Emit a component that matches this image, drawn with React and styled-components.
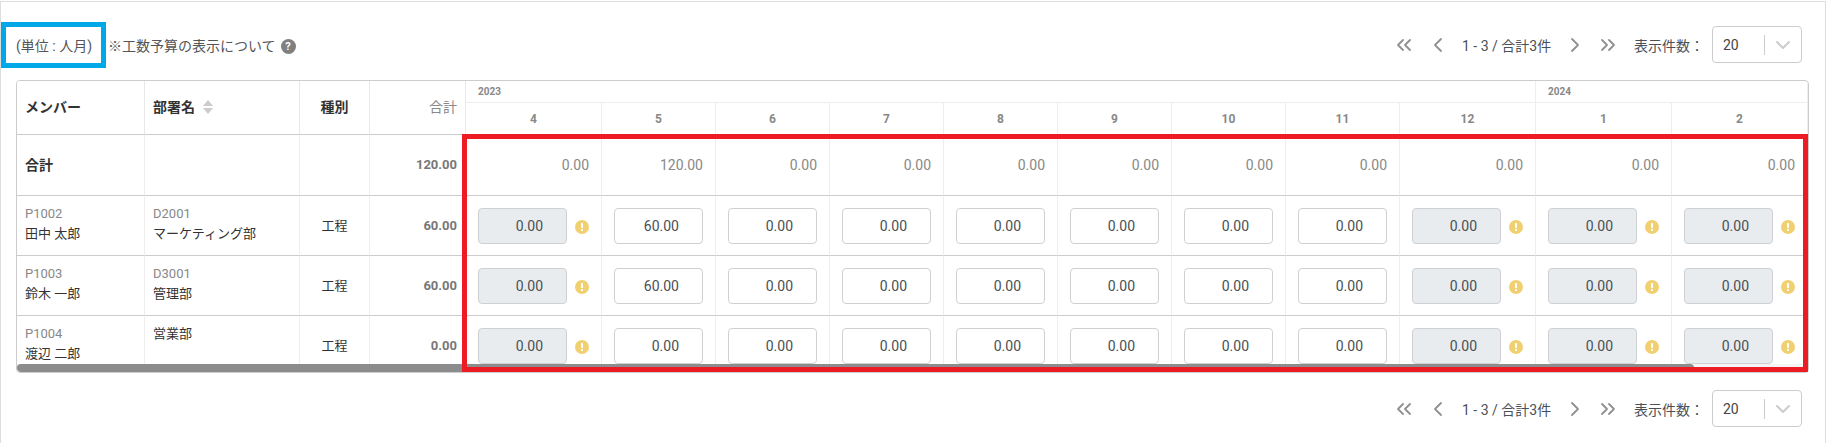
import React from "react";
import styled, { createGlobalStyle } from "styled-components";
import { ChevronLeft, ChevronRight, ChevronsLeft, ChevronsRight, ChevronDown } from "lucide-react";

const Global = createGlobalStyle`
  html, body { margin: 0; padding: 0; background: #fff; overflow: hidden; }
  body { font-family: Roboto, "Noto Sans CJK JP", sans-serif; color: #333; }
  * { box-sizing: border-box; }
`;

const Panel = styled.div`
  position: relative;
  height: 442px;
  margin-top: 1px;
  padding: 0 16px 0 15px;
  border: 1px solid #ddd;
  border-bottom: none;
`;
const Toolbar = styled.div`
  display: flex;
  align-items: center;
  justify-content: space-between;
  height: 37px;
  margin-top: 24px;
  margin-bottom: 17px;
  padding-right: 7px;
`;
const BottomBar = styled(Toolbar)`
  justify-content: flex-end;
  margin-top: 17px;
  margin-bottom: 0;
`;
const Notes = styled.div`
  display: flex;
  align-items: center;
  font-size: 14px;
  color: #555;
`;
const Unit = styled.span`
  margin-right: 16px;
`;
const HelpIcon = styled.span`
  display: inline-flex;
  align-items: center;
  justify-content: center;
  width: 15px;
  height: 15px;
  margin: 3px 0 0 5px;
  border-radius: 50%;
  background: #808080;
  color: #fff;
  font-size: 11px;
  font-weight: 700;
`;
const Pager = styled.div`
  display: flex;
  align-items: center;
  font-size: 14px;
  color: #495057;
`;
const PagerButton = styled.span`
  display: flex;
  justify-content: center;
  width: ${(p) => p.$w}px;
  color: #909090;
`;
const PageInfo = styled.span`
  width: 89px;
  margin: 0 4px;
  white-space: nowrap;
`;
const PerPageLabel = styled.span`
  width: 70px;
  margin-left: 13px;
  white-space: nowrap;
`;
const Select = styled.div`
  display: flex;
  align-items: center;
  width: 90px;
  height: 37px;
  margin-left: 8px;
  padding-left: 10px;
  border: 1px solid #ccc;
  border-radius: 4px;
`;
const SelectValue = styled.span`
  width: 41px;
  color: #444;
`;
const SelectDivider = styled.span`
  width: 1px;
  height: 20px;
  background: #ccc;
`;
const SelectCaret = styled.span`
  display: flex;
  justify-content: center;
  width: 36px;
  color: #ccc;
`;
const TableFrame = styled.div`
  position: relative;
  width: 1793px;
  height: 293px;
  overflow: hidden;
  border: 1px solid #ccc;
  border-radius: 4px;
`;
const Table = styled.table`
  width: 100%;
  table-layout: fixed;
  border-collapse: separate;
  border-spacing: 0;
`;
const Th = styled.th`
  padding: 0 8px 2px;
  font-size: 14px;
  line-height: 20px;
  font-weight: ${(p) => (p.$light ? 400 : 700)};
  color: ${(p) => (p.$light ? "#888" : "#333")};
  text-align: ${(p) => p.$align || "left"};
  border-right: 1px solid #e8e8e8;
  border-bottom: 1px solid #ccc;
  vertical-align: middle;
  background: #fff;
`;
const YearTh = styled.th`
  height: 22px;
  padding: 0 12px;
  font-size: 10px;
  font-weight: 700;
  color: #888;
  text-align: left;
  border-right: 1px solid #eee;
  border-bottom: 1px solid #eee;
`;
const MonthTh = styled.th`
  height: 32px;
  font-size: 12px;
  font-weight: 700;
  color: #888;
  text-align: center;
  border-right: 1px solid #eee;
  border-bottom: 1px solid #ccc;
`;
const SortIcon = styled.svg`
  margin-left: 8px;
  vertical-align: -2px;
`;
const Td = styled.td`
  height: ${(p) => p.$h || 60}px;
  padding: ${(p) => (p.$top ? "8px 8px 0" : "0 8px")};
  font-size: ${(p) => (p.$size || 13)}px;
  line-height: 20px;
  font-weight: ${(p) => (p.$strong ? 700 : 400)};
  color: ${(p) => p.$color || "#333"};
  text-align: ${(p) => p.$align || "left"};
  vertical-align: ${(p) => (p.$top ? "top" : "middle")};
  border-right: 1px solid #eee;
  border-bottom: 1px solid #ccc;
`;
const MonthTotal = styled.td`
  padding: 0 12px;
  font-size: 14px;
  color: #888;
  text-align: right;
  border-right: 1px solid #eee;
  border-bottom: 1px solid #ccc;
`;
const MonthCell = styled.td`
  padding: 0 12px;
  border-right: 1px solid #eee;
  border-bottom: 1px solid #ccc;
`;
const CellInner = styled.div`
  display: flex;
  align-items: center;
  justify-content: space-between;
`;
const Code = styled.div`
  color: #888;
`;
const Amount = styled.input`
  width: 89px;
  height: 36px;
  padding: 0 23px 0 0;
  border: 1px solid #ced0d4;
  border-radius: 4px;
  font: 14px Roboto, sans-serif;
  color: #495057;
  text-align: right;
  background: ${(p) => (p.$locked ? "#e9ecef" : "#fff")};
  outline: none;
`;
const Warn = styled.svg`
  flex: none;
  margin-top: 2px;
`;
const ScrollTrack = styled.div`
  position: absolute;
  left: 0;
  right: 0;
  bottom: 0;
  height: 8px;
  background: #f4f4f4;
`;
const ScrollThumb = styled.div`
  width: 1677px;
  height: 8px;
  border-radius: 4px;
  background: rgba(96, 96, 96, 0.7);
`;
const Callout = styled.div`
  position: absolute;
  border: 5px solid ${(p) => p.$color};
`;
const UnitCallout = styled(Callout)`
  left: 0;
  top: 20px;
  width: 105px;
  height: 46px;
`;
const RangeCallout = styled(Callout)`
  left: 461px;
  top: 132px;
  width: 1346px;
  height: 238px;
`;

const months = [4, 5, 6, 7, 8, 9, 10, 11, 12, 1, 2];
const widths = [136, 114, 114, 114, 114, 114, 114, 114, 136, 136, 136];
const locked = [true, false, false, false, false, false, false, false, true, true, true];
const rows = [
  { code: "P1002", name: "田中 太郎", dept: "D2001", deptName: "マーケティング部", total: "60.00", may: "60.00" },
  { code: "P1003", name: "鈴木 一郎", dept: "D3001", deptName: "管理部", total: "60.00", may: "60.00" },
  { code: "P1004", name: "渡辺 二郎", dept: null, deptName: "営業部", total: "0.00", may: "0.00" },
];

const WarnIcon = () => (
  <Warn width="14" height="14" viewBox="0 0 14 14">
    <circle cx="7" cy="7" r="7" fill="#f0d070" />
    <rect x="6" y="3" width="2" height="5" rx="0.6" fill="#fff" />
    <rect x="6" y="9" width="2" height="2" rx="0.6" fill="#fff" />
  </Warn>
);

const PagerBlock = () => (
  <Pager>
    <PagerButton $w={28}><ChevronsLeft size={24} strokeWidth={1.8} /></PagerButton>
    <PagerButton $w={40}><ChevronLeft size={24} strokeWidth={1.8} /></PagerButton>
    <PageInfo>1 - 3 / 合計3件</PageInfo>
    <PagerButton $w={40}><ChevronRight size={24} strokeWidth={1.8} /></PagerButton>
    <PagerButton $w={26}><ChevronsRight size={24} strokeWidth={1.8} /></PagerButton>
    <PerPageLabel>表示件数：</PerPageLabel>
    <Select>
      <SelectValue>20</SelectValue>
      <SelectDivider />
      <SelectCaret><ChevronDown size={24} strokeWidth={2} /></SelectCaret>
    </Select>
  </Pager>
);

export default function App() {
  return (
    <>
      <Global />
      <Panel>
        <Toolbar>
          <Notes>
            <Unit>(単位 : 人月)</Unit>
            ※工数予算の表示について
            <HelpIcon>?</HelpIcon>
          </Notes>
          <PagerBlock />
        </Toolbar>
        <TableFrame>
          <Table>
            <colgroup>
              <col width="128" />
              <col width="155" />
              <col width="70" />
              <col width="96" />
              {widths.map((w, i) => <col key={i} width={w} />)}
            </colgroup>
            <thead>
              <tr>
                <Th rowSpan={2}>メンバー</Th>
                <Th rowSpan={2}>
                  部署名
                  <SortIcon width="10" height="14" viewBox="0 0 10 14">
                    <path d="M5 0l5 6H0z M5 14l5-6H0z" fill="#ccc" />
                  </SortIcon>
                </Th>
                <Th rowSpan={2} $align="center">種別</Th>
                <Th rowSpan={2} $align="right" $light>合計</Th>
                <YearTh colSpan={9}>2023</YearTh>
                <YearTh colSpan={2}>2024</YearTh>
              </tr>
              <tr>
                {months.map((m, i) => <MonthTh key={i}>{m}</MonthTh>)}
              </tr>
            </thead>
            <tbody>
              <tr>
                <Td $h={61} $strong $size={14}>合計</Td>
                <Td $h={61} />
                <Td $h={61} />
                <Td $h={61} $strong $align="right" $color="#777">120.00</Td>
                {months.map((m, i) => (
                  <MonthTotal key={i}>{i === 1 ? "120.00" : "0.00"}</MonthTotal>
                ))}
              </tr>
              {rows.map((r) => (
                <tr key={r.code}>
                  <Td $top>
                    <Code>{r.code}</Code>
                    {r.name}
                  </Td>
                  <Td $top>
                    {r.dept && <Code>{r.dept}</Code>}
                    {r.deptName}
                  </Td>
                  <Td $align="center">工程</Td>
                  <Td $strong $align="right" $color="#777">{r.total}</Td>
                  {months.map((m, i) => (
                    <MonthCell key={i}>
                      <CellInner>
                        <Amount readOnly $locked={locked[i]} value={i === 1 ? r.may : "0.00"} />
                        {locked[i] && <WarnIcon />}
                      </CellInner>
                    </MonthCell>
                  ))}
                </tr>
              ))}
            </tbody>
          </Table>
          <ScrollTrack><ScrollThumb /></ScrollTrack>
        </TableFrame>
        <BottomBar>
          <PagerBlock />
        </BottomBar>
        <UnitCallout $color="#00a8e8" />
        <RangeCallout $color="#ed1c24" />
      </Panel>
    </>
  );
}
